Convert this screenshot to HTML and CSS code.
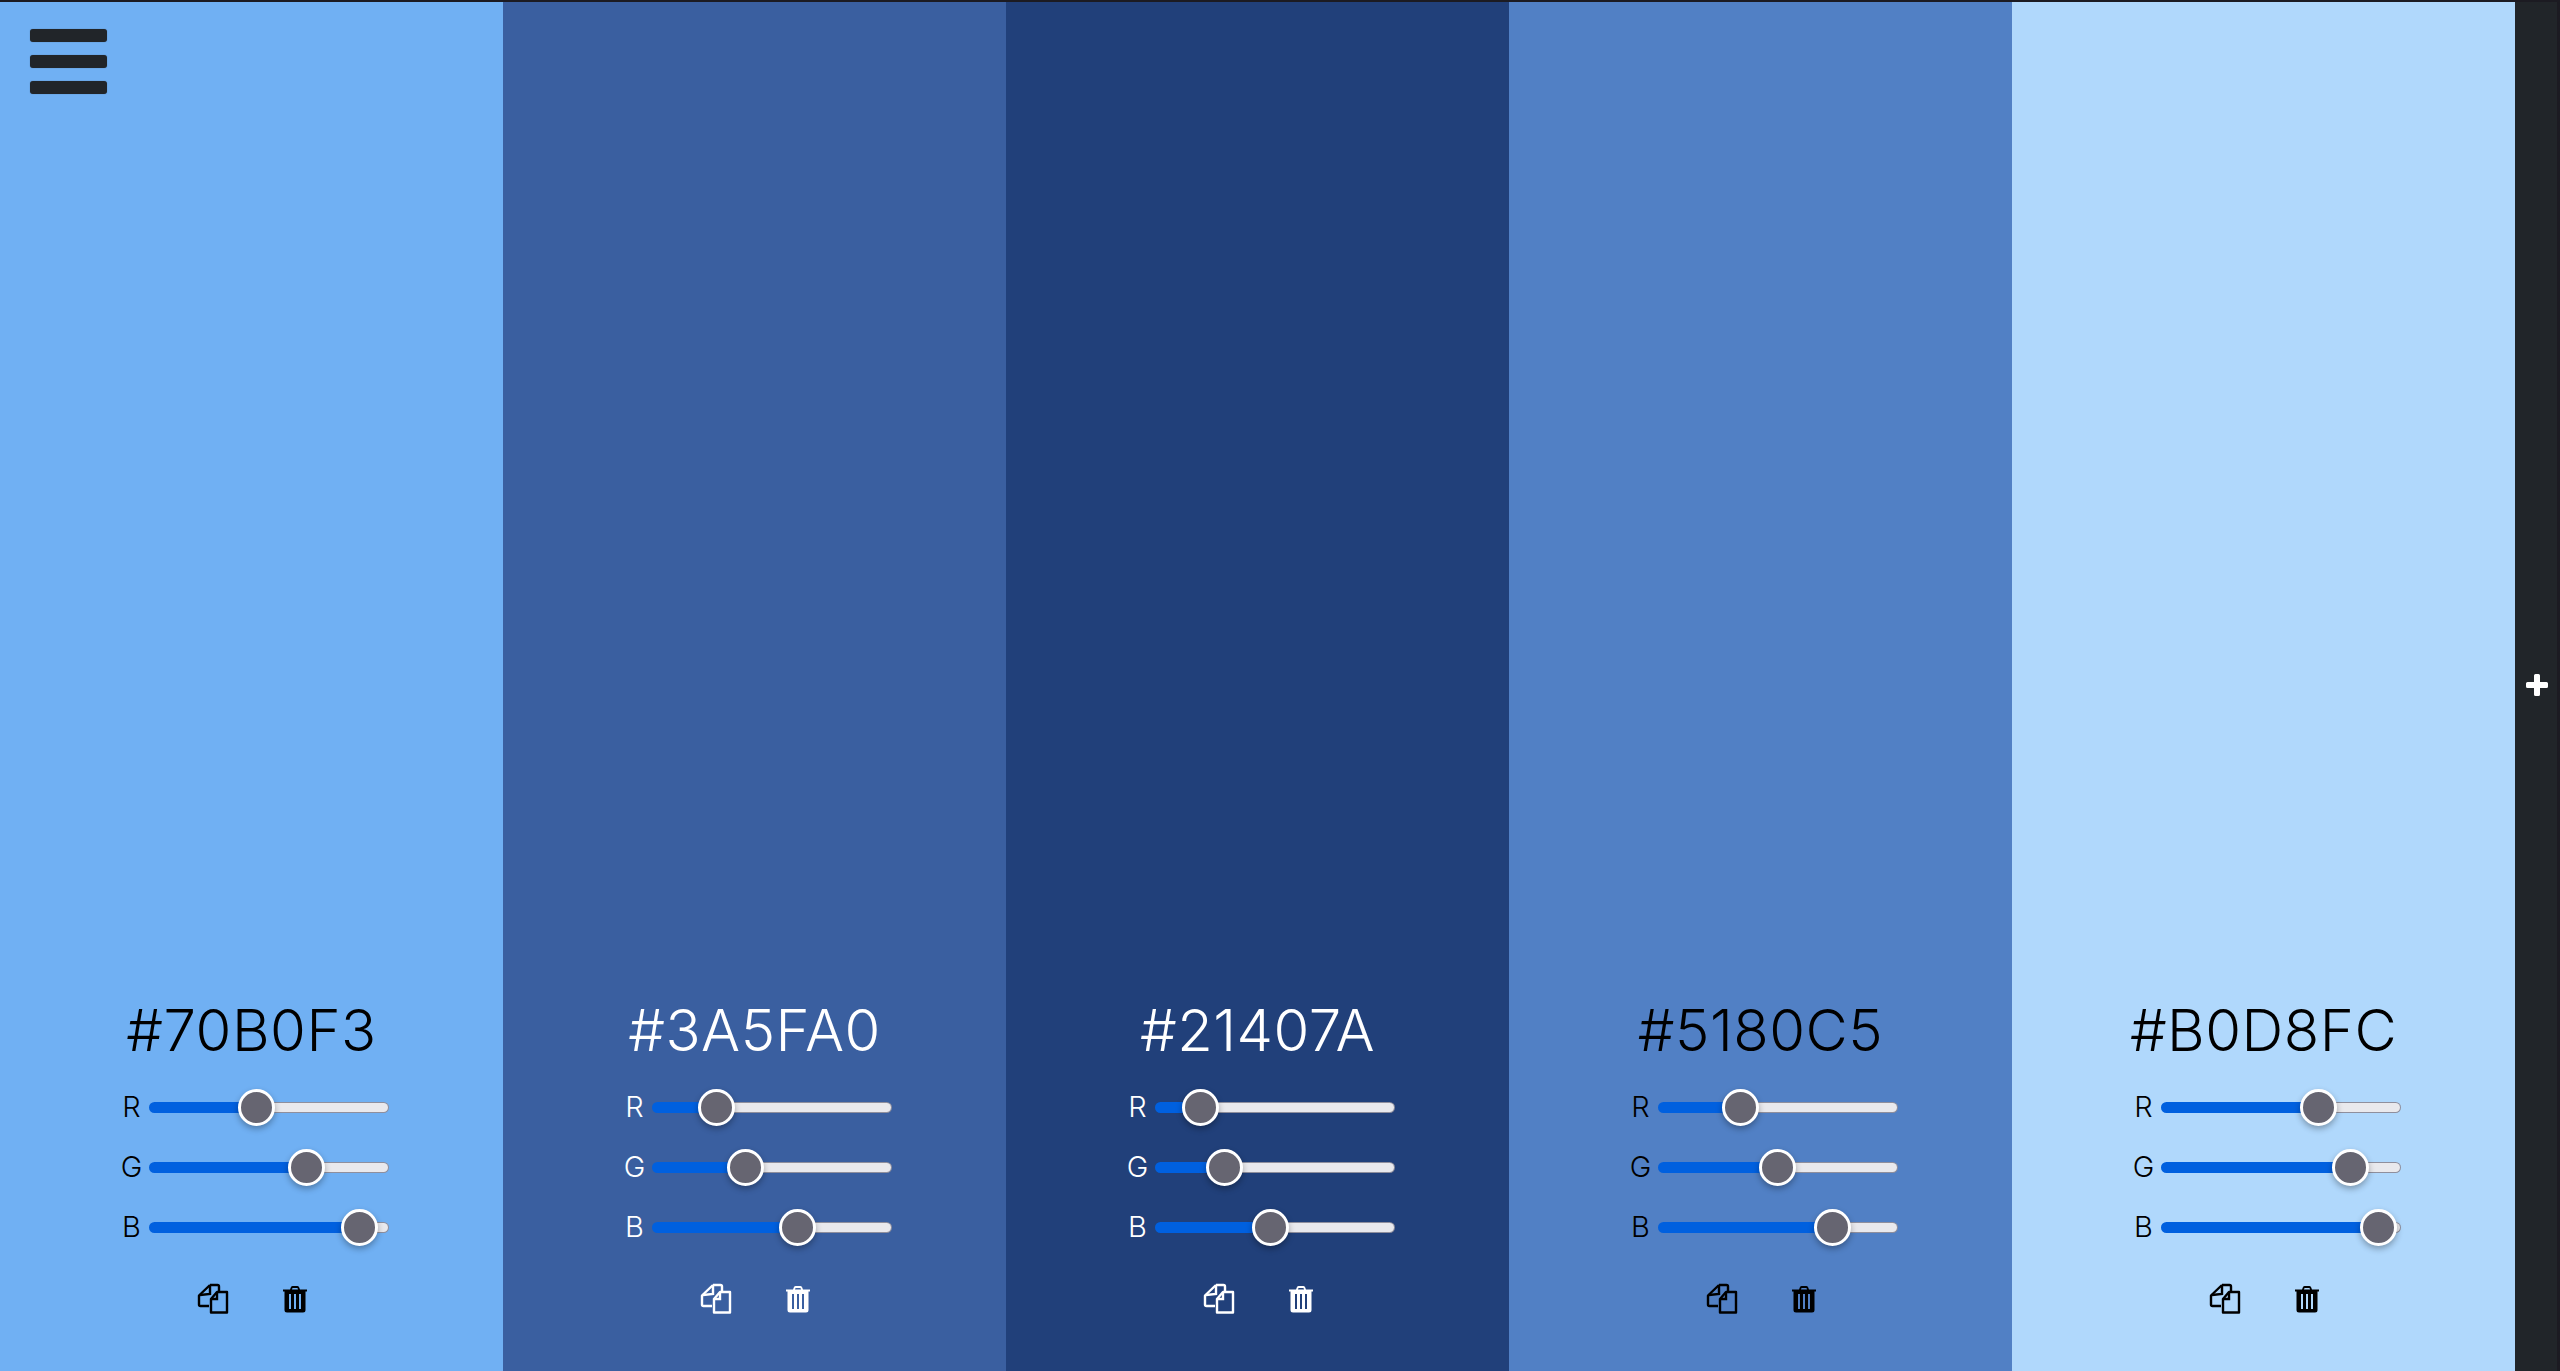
FILE: index.html
```html
<!DOCTYPE html>
<html lang="en">

<head>
    <meta charset="UTF-8">
    <meta name="viewport" content="width=device-width, initial-scale=1.0">
    <title>Palette</title>
    <link rel="stylesheet" href="styles.css">
</head>

<body>
    <button type="button" class="menu-btn" aria-label="menu"><span></span><span></span><span></span></button>

    <main class="palette">
        <section class="swatch swatch-dark-text" style="background: #70B0F3">
            <h2 class="hex">#70B0F3</h2>
            <div class="channel"><label>R</label><input type="range" min="0" max="255" value="112" style="--pos: 107px"></div>
            <div class="channel"><label>G</label><input type="range" min="0" max="255" value="176" style="--pos: 158px"></div>
            <div class="channel"><label>B</label><input type="range" min="0" max="255" value="243" style="--pos: 211px"></div>
            <div class="actions">
                <svg class="icon-copy" viewBox="0 0 32 32"><use href="#copy"></use></svg>
                <svg class="icon-trash" viewBox="0 0 24 28"><use href="#trash"></use></svg>
            </div>
        </section>
        <section class="swatch" style="background: #3A5FA0">
            <h2 class="hex">#3A5FA0</h2>
            <div class="channel"><label>R</label><input type="range" min="0" max="255" value="58" style="--pos: 64px"></div>
            <div class="channel"><label>G</label><input type="range" min="0" max="255" value="95" style="--pos: 94px"></div>
            <div class="channel"><label>B</label><input type="range" min="0" max="255" value="160" style="--pos: 145px"></div>
            <div class="actions">
                <svg class="icon-copy" viewBox="0 0 32 32"><use href="#copy"></use></svg>
                <svg class="icon-trash" viewBox="0 0 24 28"><use href="#trash"></use></svg>
            </div>
        </section>
        <section class="swatch" style="background: #21407A">
            <h2 class="hex">#21407A</h2>
            <div class="channel"><label>R</label><input type="range" min="0" max="255" value="33" style="--pos: 44px"></div>
            <div class="channel"><label>G</label><input type="range" min="0" max="255" value="64" style="--pos: 69px"></div>
            <div class="channel"><label>B</label><input type="range" min="0" max="255" value="122" style="--pos: 115px"></div>
            <div class="actions">
                <svg class="icon-copy" viewBox="0 0 32 32"><use href="#copy"></use></svg>
                <svg class="icon-trash" viewBox="0 0 24 28"><use href="#trash"></use></svg>
            </div>
        </section>
        <section class="swatch swatch-dark-text" style="background: #5180C5">
            <h2 class="hex">#5180C5</h2>
            <div class="channel"><label>R</label><input type="range" min="0" max="255" value="81" style="--pos: 82px"></div>
            <div class="channel"><label>G</label><input type="range" min="0" max="255" value="128" style="--pos: 120px"></div>
            <div class="channel"><label>B</label><input type="range" min="0" max="255" value="197" style="--pos: 175px"></div>
            <div class="actions">
                <svg class="icon-copy" viewBox="0 0 32 32"><use href="#copy"></use></svg>
                <svg class="icon-trash" viewBox="0 0 24 28"><use href="#trash"></use></svg>
            </div>
        </section>
        <section class="swatch swatch-dark-text" style="background: #B0D8FC">
            <h2 class="hex">#B0D8FC</h2>
            <div class="channel"><label>R</label><input type="range" min="0" max="255" value="176" style="--pos: 158px"></div>
            <div class="channel"><label>G</label><input type="range" min="0" max="255" value="216" style="--pos: 190px"></div>
            <div class="channel"><label>B</label><input type="range" min="0" max="255" value="252" style="--pos: 218px"></div>
            <div class="actions">
                <svg class="icon-copy" viewBox="0 0 32 32"><use href="#copy"></use></svg>
                <svg class="icon-trash" viewBox="0 0 24 28"><use href="#trash"></use></svg>
            </div>
        </section>
    </main>

    <aside class="add-bar">
        <svg class="icon-plus" viewBox="0 0 24 24"><path d="M9 2.500a1.500 1.500 0 0 1 1.500-1.500h3a1.500 1.500 0 0 1 1.500 1.500V9h6.500a1.500 1.500 0 0 1 1.500 1.500v3a1.500 1.500 0 0 1-1.500 1.500H15v6.500a1.500 1.500 0 0 1-1.500 1.500h-3A1.500 1.500 0 0 1 9 21.500V15H2.500A1.500 1.500 0 0 1 1 13.500v-3A1.500 1.500 0 0 1 2.500 9H9z"></path></svg>
    </aside>
    <div class="scrollbar"></div>

    <svg class="icon-defs" aria-hidden="true">
        <symbol id="copy" viewBox="0 0 32 32">
            <path d="M13 2H20.500A1.500 1.500 0 0 1 22 3.500V9M13 2L2 12.500V21.500A1.500 1.500 0 0 0 3.500 23H12" fill="none" stroke="currentColor" stroke-width="2.400" stroke-linejoin="round"></path>
            <path d="M13 2.500V11L3 12" fill="none" stroke="currentColor" stroke-width="2.400"></path>
            <path d="M20 9H30V29.500H14V16z" fill="none" stroke="currentColor" stroke-width="2.400" stroke-linejoin="round"></path>
            <path d="M20 9.500V16H14" fill="none" stroke="currentColor" stroke-width="2.400"></path>
        </symbol>
        <symbol id="trash" viewBox="0 0 24 28">
            <path fill-rule="evenodd" d="M0 4.500H7L8 2A2 2 0 0 1 10 1H14A2 2 0 0 1 16 2L17 4.500H24V6.500H22.500V25A2.500 2.500 0 0 1 20 27.500H4A2.500 2.500 0 0 1 1.500 25V6.500H0zM9.500 3L9 4.500H15L14.500 3zM6 9V24H8V9zM11 9V24H13V9zM16 9V24H18V9z"></path>
        </symbol>
    </svg>
</body>

</html>
```

FILE: styles.css
```css
* {
    box-sizing: border-box;
}

html,
body {
    height: 100%;
    margin: 0;
}

body {
    display: flex;
    overflow: hidden;
    border-top: 2px solid #1c1b22;
    background: #212529;
    font-family: Inter, "Noto Sans", sans-serif;
    font-weight: 300;
}

.menu-btn {
    position: absolute;
    top: 29px;
    left: 30px;
    display: flex;
    flex-direction: column;
    gap: 13px;
    width: 77px;
    padding: 0;
    border: 0;
    background: none;
}

.menu-btn span {
    display: block;
    height: 13px;
    border-radius: 3px;
    background: #212529;
    box-shadow: 0 0 1px rgba(33, 37, 41, 0.5);
}

.palette {
    display: flex;
    width: 2515px;
}

.swatch {
    display: flex;
    flex-direction: column;
    align-items: center;
    justify-content: flex-end;
    width: 503px;
    padding-bottom: 56px;
    color: #fff;
}

.swatch-dark-text {
    color: #000;
}

.hex {
    margin: 0 0 25px;
    font-size: 58px;
    font-weight: 300;
    letter-spacing: 0.5px;
    line-height: 68px;
}

.channel {
    display: flex;
    align-items: center;
    height: 36px;
    margin-bottom: 24px;
}

.channel label {
    width: 34px;
    font-size: 29px;
    line-height: 36px;
    text-align: center;
}

.channel input {
    --pos: 0px;
    appearance: none;
    width: 240px;
    height: 36px;
    margin: 0;
    background: none;
}

.channel input::-webkit-slider-runnable-track {
    height: 11px;
    border: 1px solid transparent;
    border-radius: 6px;
    background:
        linear-gradient(to right, #0060df var(--pos), transparent var(--pos)) border-box,
        linear-gradient(#e9e9ed, #e9e9ed) padding-box,
        linear-gradient(#8f8f9d, #8f8f9d) border-box;
}

.channel input::-webkit-slider-thumb {
    appearance: none;
    width: 37px;
    height: 37px;
    margin-top: -14px;
    border: 3.5px solid #fff;
    border-radius: 50%;
    background: #666571;
    box-shadow: 0 3px 6px rgba(0, 0, 0, 0.3);
}

.actions {
    display: flex;
    align-items: center;
    gap: 54px;
    height: 32px;
    margin-top: 14px;
}

.icon-copy {
    width: 32px;
    height: 32px;
    fill: currentColor;
}

.icon-trash {
    width: 24px;
    height: 28px;
    fill: currentColor;
}

.add-bar {
    display: flex;
    align-items: center;
    justify-content: center;
    width: 42px;
    padding-bottom: 4px;
    padding-left: 2px;
}

.icon-plus {
    width: 24px;
    height: 24px;
    fill: #fff;
}

.scrollbar {
    width: 3px;
    background: #1c1b22;
}

.icon-defs {
    display: none;
}
```
